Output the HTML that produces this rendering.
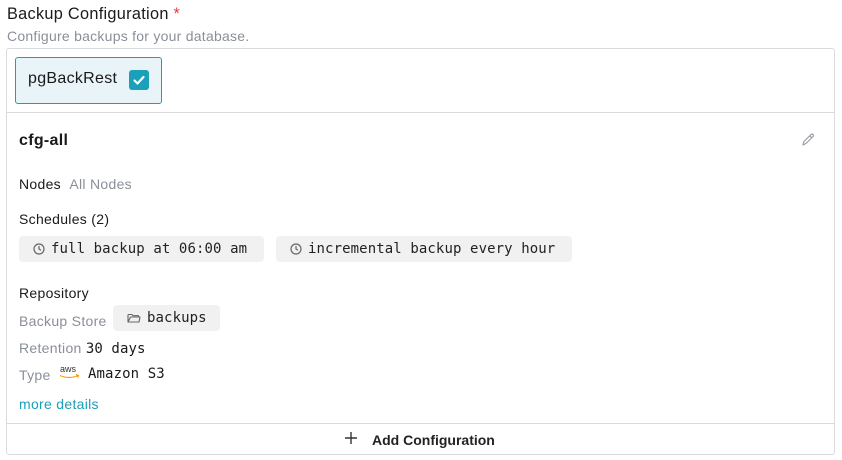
<!DOCTYPE html>
<html><head><style>
*{box-sizing:border-box;margin:0;padding:0}
body{width:842px;height:460px;background:#fff;font-family:"Liberation Sans",sans-serif;color:#1a1a1a;position:relative;overflow:hidden;letter-spacing:0.3px}
.a{position:absolute;white-space:nowrap}
.mono{font-family:"DejaVu Sans Mono",monospace;letter-spacing:0.1px}
.g{color:#8a8f98}
.chip{position:absolute;background:#f1f1f1;border-radius:4px;height:26px;display:flex;align-items:center;font-family:"DejaVu Sans Mono",monospace;font-size:14px;color:#222;letter-spacing:0.1px}
</style></head><body>
<div class="a" style="left:7px;top:5px;font-size:16.3px">Backup Configuration <span style="color:#e53e3e">*</span></div>
<div class="a g" style="left:7px;top:28px;font-size:14px;letter-spacing:0.25px">Configure backups for your database.</div>
<div class="a" style="left:6px;top:48px;width:829px;height:407px;border:1px solid #d9dbde;border-radius:3px"></div>
<div class="a" style="left:7px;top:112px;width:827px;height:1px;background:#d9dbde"></div>
<div class="a" style="left:7px;top:423px;width:827px;height:1px;background:#d9dbde"></div>
<div class="a" style="left:15px;top:57px;width:147px;height:47px;background:#e8f4f8;border:1px solid #1aa0b8;border-radius:3px"></div>
<div class="a" style="left:28px;top:70px;font-size:16px">pgBackRest</div>
<div class="a" style="left:129px;top:70px;width:20px;height:20px;background:#1aa0b8;border-radius:3px">
<svg width="20" height="20" viewBox="0 0 20 20"><path d="M5.5 10.5l3 3 6-6.5" stroke="#fff" stroke-width="2.2" fill="none" stroke-linecap="round" stroke-linejoin="round"/></svg></div>
<div class="a" style="left:19px;top:132px;font-size:16px;font-weight:bold">cfg-all</div>
<svg class="a" style="left:800px;top:132px" width="16" height="16" viewBox="0 0 16 16"><path d="M3 13l1-3.5 7-7a1.4 1.4 0 0 1 2 2l-7 7z M9.8 3.8l2 2" stroke="#9a9ea5" stroke-width="1.2" fill="none" stroke-linejoin="round"/></svg>
<div class="a" style="left:19px;top:176px;font-size:14px">Nodes <span class="g">&nbsp;All Nodes</span></div>
<div class="a" style="left:19px;top:211px;font-size:14px">Schedules (2)</div>
<div class="chip" style="left:19px;top:236px;width:245px;padding-left:14px"><svg width="12" height="12" viewBox="0 0 12 12" style="margin-right:6px"><circle cx="6" cy="6" r="5" stroke="#666" fill="none" stroke-width="1.2"/><path d="M6 3v3l2 1.3" stroke="#666" fill="none" stroke-width="1.2"/></svg>full backup at 06:00 am</div>
<div class="chip" style="left:276px;top:236px;width:296px;padding-left:14px"><svg width="12" height="12" viewBox="0 0 12 12" style="margin-right:6px"><circle cx="6" cy="6" r="5" stroke="#666" fill="none" stroke-width="1.2"/><path d="M6 3v3l2 1.3" stroke="#666" fill="none" stroke-width="1.2"/></svg>incremental backup every hour</div>
<div class="a" style="left:19px;top:285px;font-size:14px">Repository</div>
<div class="a g" style="left:19px;top:313px;font-size:14px">Backup Store</div>
<div class="chip" style="left:113px;top:305px;width:107px;padding-left:14px"><svg width="14" height="12" viewBox="0 0 14 12" style="margin-right:6px"><path d="M1 2.5v7.5h11l1-5H3.5l-2.5 5M1 2.5h4l1 1.2h5.5v1.8" stroke="#666" fill="none" stroke-width="1.1" stroke-linejoin="round"/></svg>backups</div>
<div class="a" style="left:19px;top:340px;font-size:14px"><span class="g">Retention</span> <span class="mono">30 days</span></div>
<div class="a g" style="left:19px;top:367px;font-size:14px">Type</div>
<div class="a" style="left:60px;top:365px;font-size:9px;color:#333;line-height:9px;letter-spacing:0">aws</div>
<svg class="a" style="left:59px;top:374px" width="21" height="6" viewBox="0 0 21 6"><path d="M1 1.5q9 4 18 0M17 0.5l2.5 1-1 2" stroke="#f90" fill="none" stroke-width="1.2"/></svg>
<div class="a mono" style="left:88px;top:366px;font-size:14px">Amazon S3</div>
<div class="a" style="left:19px;top:396px;font-size:14px;color:#1aa0b8">more details</div>
<svg class="a" style="left:344px;top:431px" width="14" height="14" viewBox="0 0 14 14"><path d="M7 1v12M1 7h12" stroke="#333" stroke-width="1.4"/></svg>
<div class="a" style="left:372px;top:432px;font-size:14px;font-weight:bold;color:#222;letter-spacing:0">Add Configuration</div>
</body></html>
